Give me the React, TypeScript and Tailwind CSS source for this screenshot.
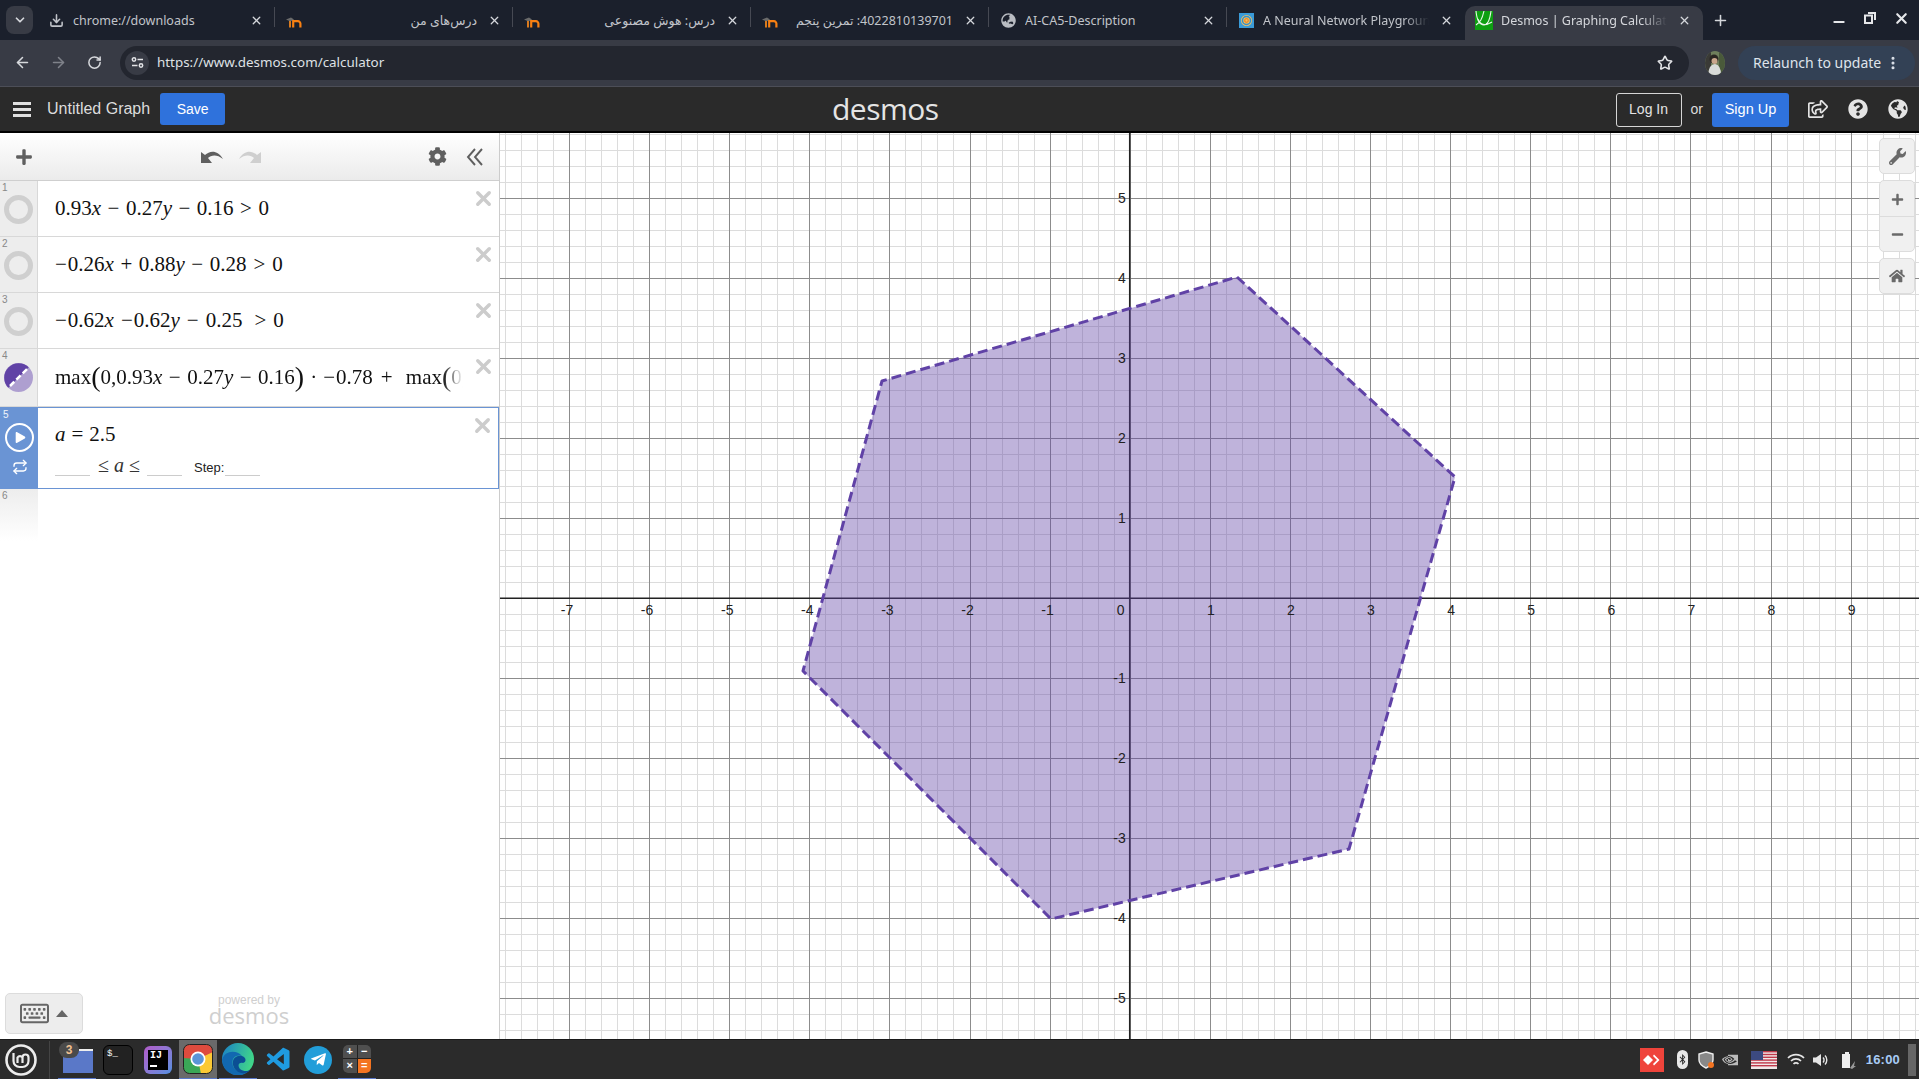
import React from "react";
import { ArrowLeft, ArrowRight, RotateCw, Star, Download, X, Plus, ChevronDown, Minus, EllipsisVertical, Repeat } from "lucide-react";
import { FaCog, FaWrench, FaPlus, FaMinus, FaHome, FaQuestionCircle, FaGlobeAmericas, FaRegShareSquare, FaBluetoothB, FaTelegramPlane, FaRegKeyboard, FaPlay, FaGlobeAsia } from "react-icons/fa";
import { SiNvidia } from "react-icons/si";
import { VscVscode } from "react-icons/vsc";

const Moodle = () => (
  <svg width="16" height="11" viewBox="0 0 16 11" className="mt-[3px]">
    <path d="M0 2.5 5 0.5 8 2.5 4.5 4.5Z" fill="#6b6b6b" />
    <rect x="3" y="4" width="2" height="6.5" fill="#d97a1e" />
    <path d="M7.2 10.5V4.2H12a2.4 2.4 0 0 1 2.4 2.4v3.9" fill="none" stroke="#f98012" strokeWidth="2.2" />
  </svg>
);

function Tab({ icon, title, rtl, active, sep = true, fade }: { icon: React.ReactNode; title: string; rtl?: boolean; active?: boolean; sep?: boolean; fade?: boolean }) {
  return (
    <div className={`relative w-[238px] shrink-0 h-[34px] flex items-center pl-[10px] pr-[12px] pb-[5px] gap-[8px] ${active ? "bg-[#383b45] rounded-t-[10px]" : ""}`}>
      <span className="w-[18px] flex justify-center shrink-0">{icon}</span>
      <span dir={rtl ? "rtl" : undefined} className={`flex-1 min-w-0 whitespace-nowrap overflow-hidden text-[12.5px] leading-[18px] ${active ? "text-[#d5d7dc]" : "text-[#c1c4ca]"} ${fade ? "[mask-image:linear-gradient(to_right,black_85%,transparent)]" : ""}`}>
        {title}
      </span>
      <X size={13} strokeWidth={2.4} className="shrink-0 ml-[3px] text-[#d5d7dc]" />
      {sep && <span className="absolute right-0 top-[1px] h-[20px] w-px bg-[#464953]" />}
    </div>
  );
}

function TabStrip() {
  return (
    <div className="h-10 bg-[#1b202c] flex items-end pl-[6px] shrink-0">
      <div className="w-[27px] h-[28px] mb-[6px] rounded-lg bg-[#383b45] flex items-center justify-center mr-[4px]">
        <ChevronDown size={14} strokeWidth={3} className="text-[#d5d7dc]" />
      </div>
      <Tab icon={<Download size={15} strokeWidth={2.5} className="text-[#c1c4ca]" />} title="chrome://downloads" />
      <Tab icon={<Moodle />} title="درس‌های من" rtl />
      <Tab icon={<Moodle />} title="درس: هوش مصنوعی" rtl />
      <Tab icon={<Moodle />} title="4022810139701: تمرین پنجم" rtl />
      <Tab icon={<FaGlobeAsia size={15} className="text-[#b9bcc2]" />} title="AI-CA5-Description" />
      <Tab
        icon={
          <svg width="15" height="15" viewBox="0 0 15 15">
            <rect width="15" height="15" fill="#3a9bd8" />
            <circle cx="7.5" cy="7.5" r="5.5" fill="#f3c05f" />
            <circle cx="7.5" cy="7.5" r="4" fill="none" stroke="#2f8fd0" strokeWidth="1.5" />
            <circle cx="7.5" cy="7.5" r="1.8" fill="none" stroke="#e88a2e" strokeWidth="1.3" />
          </svg>
        }
        title="A Neural Network Playground"
        sep={false}
        fade
      />
      <Tab
        active
        sep={false}
        fade
        icon={
          <svg width="18" height="19" viewBox="0 0 18 19">
            <rect width="18" height="19" fill="#0e9f12" />
            <path d="M1 0 C2 11 5 14 9 14 C13 14 15 8 16 0 M3 8 C6 16 12 14 17 11 M1 14 C5 11 7 9 9 0" fill="none" stroke="#e8f5e8" strokeWidth="1.1" />
          </svg>
        }
        title="Desmos | Graphing Calculator"
      />
      <Plus size={17} strokeWidth={2.2} className="ml-[9px] mb-[11px] text-[#d5d7dc]" />
      <div className="ml-auto mb-[10px] flex items-center gap-[17px] pr-[9px] text-[#e6e7ea]">
        <Minus size={16} strokeWidth={3} className="mt-[8px]" />
        <svg width="12" height="12" viewBox="0 0 12 12" fill="none" stroke="currentColor" strokeWidth="2"><rect x="1" y="3.5" width="7" height="7.5" /><path d="M4 1h7v7" /></svg>
        <X size={17} strokeWidth={3} />
      </div>
    </div>
  );
}

function Toolbar() {
  return (
    <div className="h-[47px] bg-[#383b45] border-b border-[#4c4e57] flex items-center shrink-0 pl-[14px] pr-[4px] pb-[1px]">
      <ArrowLeft size={17} strokeWidth={2.2} className="text-[#d7d9dd]" />
      <ArrowRight size={17} strokeWidth={2.2} className="ml-[19px] text-[#7f828a]" />
      <RotateCw size={15} strokeWidth={2.4} className="ml-[20px] text-[#d7d9dd]" />
      <div className="ml-[18px] w-[1569px] h-[34px] rounded-full bg-[#23262f] flex items-center pl-[5px] pr-[16px]">
        <span className="w-6 h-6 rounded-full bg-[#383b45] flex items-center justify-center">
          <svg width="13" height="13" viewBox="0 0 13 13" fill="none" stroke="#e3e4e7" strokeWidth="1.5">
            <circle cx="3" cy="3.5" r="1.7" /><path d="M6.5 3.5H12M1 9.5h5.5" /><circle cx="10" cy="9.5" r="1.7" />
          </svg>
        </span>
        <span className="ml-[8px] text-[13.4px] text-[#dfe1e5]">https://www.desmos.com/calculator</span>
        <Star size={16} strokeWidth={2.4} className="ml-auto text-[#e3e4e7]" />
      </div>
      <svg width="20" height="24" viewBox="0 0 20 24" className="ml-[16px] shrink-0">
        <defs><clipPath id="av"><ellipse cx="10" cy="12" rx="10" ry="12" /></clipPath></defs>
        <g clipPath="url(#av)">
          <rect width="20" height="24" fill="#6f7f5c" />
          <rect x="14" width="6" height="24" fill="#4a5a3a" />
          <rect y="0" width="6" height="24" fill="#3a3a36" />
          <circle cx="9" cy="8" r="4.5" fill="#2a2622" />
          <circle cx="9.5" cy="10" r="3" fill="#c9a68c" />
          <path d="M3 24 Q4 13 10 13 Q16 14 16 24Z" fill="#d9dbd9" />
        </g>
      </svg>
      <div className="ml-[13px] w-[177px] h-[34px] rounded-full bg-[#334155] flex items-center pl-[15px] text-[#dfe4ec] text-[14px]">
        Relaunch to update
        <EllipsisVertical size={16} strokeWidth={2.6} className="ml-[4px]" />
      </div>
    </div>
  );
}

function Header() {
  return (
    <div className="h-[46px] bg-[#2a2a2a] border-b-2 border-black flex items-center shrink-0 relative [font-family:'Liberation_Sans',sans-serif]">
      <div className="ml-[13px] w-[18px] h-[15px] flex flex-col justify-between">
        <span className="h-[3px] bg-[#e0e0e0]" /><span className="h-[3px] bg-[#e0e0e0]" /><span className="h-[3px] bg-[#e0e0e0]" />
      </div>
      <span className="ml-[16px] text-[16px] text-[#dcdcdc]">Untitled Graph</span>
      <button className="ml-[10px] w-[65px] h-[32px] rounded-[3px] bg-[#2f72dc] text-white text-[14px]">Save</button>
      <span className="absolute left-[832px] top-[-1px] text-[30px] leading-[46px] font-normal text-[#e4e4e4] [font-family:'Open_Sans',sans-serif] tracking-[-0.5px]">desmos</span>
      <button className="ml-auto mt-[1px] w-[66px] h-[34px] rounded-[3px] border border-[#d5d5d5] text-[#e4e4e4] text-[14px]">Log In</button>
      <span className="ml-[9px] text-[14px] text-[#dcdcdc]">or</span>
      <button className="ml-[9px] mt-[1px] w-[77px] h-[34px] rounded-[3px] bg-[#2f72dc] text-white text-[14.5px]">Sign Up</button>
      <FaRegShareSquare size={20} className="ml-[19px] text-[#e4e4e4]" />
      <FaQuestionCircle size={20} className="ml-[20px] text-[#e4e4e4]" />
      <FaGlobeAmericas size={20} className="ml-[20px] mr-[11px] text-[#e4e4e4]" />
    </div>
  );
}

const I = ({ children }: { children: React.ReactNode }) => <i className="italic">{children}</i>;
const Op = ({ children, w = "mx-[6.5px]" }: { children: React.ReactNode; w?: string }) => <span className={w}>{children}</span>;
const Neg = () => <span className="mr-[1px]">−</span>;

function CloseX() {
  return <X size={23} strokeWidth={3.6} className="absolute right-[4px] top-[6px] text-[#cccccc]" />;
}

function Row({ n, h, pt = "pt-[12px]", children, icon }: { n: number; h: string; pt?: string; children: React.ReactNode; icon?: React.ReactNode }) {
  return (
    <div className={`${h} flex border-b border-[#d8d8d8] relative shrink-0`}>
      <div className="w-[38px] bg-[#ededed] border-r border-[#d8d8d8] relative shrink-0">
        <span className="absolute left-[2px] top-[1px] text-[10px] leading-[12px] text-[#888]">{n}</span>
        <div className="absolute left-[4px] top-[14px]">{icon ?? <span className="block w-[29px] h-[29px] rounded-full border-[5px] border-[#cfcfcf] bg-[#ededed]" />}</div>
      </div>
      <div className={`flex-1 min-w-0 pl-[17px] pr-[36px] ${pt} text-[21px] leading-[30px] whitespace-nowrap overflow-hidden text-[#111] [font-family:'Liberation_Serif',serif]`}>
        {children}
      </div>
      <CloseX />
    </div>
  );
}

const Paren = ({ c }: { c: string }) => <span className="text-[28px] leading-[28px] align-[-2px] font-light">{c}</span>;

function ExpressionPanel() {
  return (
    <div className="w-[500px] shrink-0 border-r border-[#cccccc] bg-white relative flex flex-col [font-family:'Liberation_Sans',sans-serif]">
      <div className="h-[48px] shrink-0 bg-gradient-to-b from-white to-[#ebebeb] border-b border-[#cfcfcf] flex items-center text-[#5f5f5f]">
        <FaPlus size={18} className="ml-[15px]" />
        <svg width="22" height="14" viewBox="0 0 22 14" className="ml-[168px] mb-[2px]" fill="#5f5f5f"><path d="M0 14V3l4 3C9 1 17 1 22 10 16 5 10 6 7 9l4 5Z" /></svg>
        <svg width="22" height="14" viewBox="0 0 22 14" className="ml-[16px] mb-[2px]" fill="#cfcfcf"><path d="M22 14V3l-4 3C13 1 5 1 0 10c6-5 12-4 15-1l-4 5Z" /></svg>
        <FaCog size={19} className="ml-[167px]" />
        <span className="ml-[19px] flex">
          <svg width="18" height="18" viewBox="0 0 18 18" fill="none" stroke="#5f5f5f" strokeWidth="1.9"><path d="M9 1 2 9l7 8M16 1 9 9l7 8" /></svg>
        </span>
      </div>
      <Row n={1} h="h-[56px]"><span>0.93<I>x</I><Op>−</Op>0.27<I>y</I><Op>−</Op>0.16<Op>&gt;</Op>0</span></Row>
      <Row n={2} h="h-[56px]"><span><Neg />0.26<I>x</I><Op>+</Op>0.88<I>y</I><Op>−</Op>0.28<Op w="mx-[7px]">&gt;</Op>0</span></Row>
      <Row n={3} h="h-[56px]"><span><Neg />0.62<I>x</I><Op w="ml-[7px] mr-[1px]">−</Op>0.62<I>y</I><Op w="mx-[7px]">−</Op>0.25<Op w="ml-[12px] mr-[7px]">&gt;</Op>0</span></Row>
      <Row
        n={4}
        h="h-[58px]"
        pt="pt-[13px]"
        icon={
          <svg width="29" height="29" viewBox="0 0 29 29" className="block">
            <circle cx="14.5" cy="14.5" r="14.5" fill="#ae9fd0" />
            <path d="M4.25 24.75 A14.5 14.5 0 0 1 24.75 4.25 Z" fill="#6042a6" />
            <path d="M6 23 L23 6" stroke="#fff" strokeWidth="2.5" strokeDasharray="6 3" />
          </svg>
        }
      >
        <div className="[mask-image:linear-gradient(to_right,black_95%,transparent)] overflow-hidden">
          max<Paren c="(" />0,0.93<I>x</I><Op>−</Op>0.27<I>y</I><Op>−</Op>0.16<Paren c=")" /><Op w="mx-[6px]">·</Op><Neg />0.78<Op w="mx-[8px]">+</Op> max<Paren c="(" />0,
        </div>
      </Row>
      <div className="h-[82px] flex shrink-0 relative border border-[#6a94d4]">
        <div className="w-[37px] bg-[#6a94d4] relative shrink-0 flex flex-col items-center text-white">
          <span className="absolute left-[2px] top-[1px] text-[10px] leading-[12px] text-[#f0f4fa]">5</span>
          <span className="mt-[15px] w-[29px] h-[29px] rounded-full border-2 border-white flex items-center justify-center">
            <FaPlay size={11} className="ml-[2px]" />
          </span>
          <Repeat size={16} strokeWidth={2} className="mt-[7px]" />
        </div>
        <div className="flex-1 pl-[17px] pt-[11px] [font-family:'Liberation_Serif',serif] text-[#111]">
          <div className="text-[21px] leading-[30px]"><I>a</I><Op w="mx-[6px]">=</Op>2.5</div>
          <div className="mt-[5px] flex items-end h-[22px]">
            <span className="w-[35px] border-b border-[#ccc] h-[22px]" />
            <span className="ml-[8px] mr-[7px] text-[20px] leading-[22px] text-[#333] whitespace-nowrap">≤ <I>a</I> ≤</span>
            <span className="w-[35px] border-b border-[#ccc] h-[22px]" />
            <span className="ml-[12px] text-[13px] leading-[16px] text-[#222] [font-family:'Liberation_Sans',sans-serif]">Step:</span>
            <span className="ml-[1px] w-[35px] border-b border-[#ccc] h-[22px]" />
          </div>
        </div>
        <CloseX />
      </div>
      <div className="h-[52px] w-[38px] shrink-0 bg-gradient-to-b from-[#ededed] to-white relative">
        <span className="absolute left-[2px] top-[1px] text-[10px] leading-[12px] text-[#888]">6</span>
      </div>
      <div className="absolute left-[5px] bottom-[5px] w-[78px] h-[41px] rounded-[5px] bg-[#ededed] border border-[#dcdcdc] flex items-center justify-center gap-[7px] text-[#666]">
        <FaRegKeyboard size={29} />
        <span className="w-0 h-0 border-x-[6px] border-x-transparent border-b-[7px] border-b-[#666]" />
      </div>
      <div className="absolute left-[208px] bottom-[14px] w-[82px] flex flex-col items-center text-[#cfcfcf]">
        <span className="text-[12px] leading-[10px]">powered by</span>
        <span className="text-[22px] leading-[20px] [font-family:'Open_Sans',sans-serif]">desmos</span>
      </div>
    </div>
  );
}

const OX = 629.7, OY = 465.3, UX = 80.1, UY = 80;
const W = 1419, H = 906;
const range = (a: number, b: number) => Array.from({ length: b - a + 1 }, (_, i) => a + i);
const poly = [[1237, 277], [1455, 477], [1349, 849], [1051, 919], [803, 671], [882, 381]].map(([x, y]) => `${x - 500},${y - 133}`).join(" ");

function Graph() {
  return (
    <div className="flex-1 min-w-0 relative bg-white overflow-hidden [font-family:'Liberation_Sans',sans-serif]">
      <svg width={W} height={H} viewBox={`0 0 ${W} ${H}`} className="block">
        {range(-40, 50).map((i) => <line key={`vm${i}`} x1={Math.round(OX + (i * UX) / 5) + 0.5} x2={Math.round(OX + (i * UX) / 5) + 0.5} y1={0} y2={H} stroke="#dcdcdc" />)}
        {range(-35, 35).map((i) => <line key={`hm${i}`} y1={Math.round(OY - (i * UY) / 5) + 0.5} y2={Math.round(OY - (i * UY) / 5) + 0.5} x1={0} x2={W} stroke="#dcdcdc" />)}
        {range(-8, 10).map((i) => <line key={`v${i}`} x1={Math.round(OX + i * UX) + 0.5} x2={Math.round(OX + i * UX) + 0.5} y1={0} y2={H} stroke="#8c8c8c" />)}
        {range(-6, 6).map((i) => <line key={`h${i}`} y1={Math.round(OY - i * UY) + 0.5} y2={Math.round(OY - i * UY) + 0.5} x1={0} x2={W} stroke="#8c8c8c" />)}
        <line x1={OX} x2={OX} y1={0} y2={H} stroke="#222" strokeWidth="1.5" />
        <line y1={OY} y2={OY} x1={0} x2={W} stroke="#222" strokeWidth="1.5" />
        <polygon points={poly} fill="#6042a6" fillOpacity="0.4" stroke="#6042a6" strokeWidth="3" strokeDasharray="10 5" strokeLinejoin="round" />
        {range(-7, 9).filter((i) => i !== 0).map((i) => (
          <text key={`x${i}`} x={OX + i * UX + (i < 0 ? -2 : 1)} y={OY + 16.5} textAnchor="middle" fontSize="14" fill="#222">{i}</text>
        ))}
        <text x={OX - 9} y={OY + 16.5} textAnchor="middle" fontSize="14" fill="#222">0</text>
        {range(-5, 5).filter((i) => i !== 0).map((i) => (
          <text key={`y${i}`} x={OX - 4} y={OY - i * UY + 5} textAnchor="end" fontSize="14" fill="#222">{i}</text>
        ))}
      </svg>
      <div className="absolute right-[4px] top-[5px] w-[36px] flex flex-col text-[#6a6a6a]">
        <div className="h-[36px] rounded-[5px] bg-[#f0f0f0] border border-[#dcdcdc] flex items-center justify-center"><FaWrench size={17} /></div>
        <div className="mt-[6px] h-[72px] rounded-[5px] bg-[#f0f0f0] border border-[#dcdcdc] flex flex-col">
          <div className="flex-1 flex items-center justify-center border-b border-[#dcdcdc] pt-[2px]"><FaPlus size={13} /></div>
          <div className="flex-1 flex items-center justify-center pt-[1px]"><FaMinus size={13} /></div>
        </div>
        <div className="mt-[6px] h-[36px] rounded-[5px] bg-[#f0f0f0] border border-[#dcdcdc] flex items-center justify-center"><FaHome size={16} /></div>
      </div>
    </div>
  );
}

const Chrome = () => (
  <svg width="30" height="30" viewBox="0 0 30 30">
    <defs><clipPath id="cr"><rect x="0.5" y="0.5" width="29" height="29" rx="6" /></clipPath></defs>
    <g clipPath="url(#cr)">
      <rect width="30" height="30" fill="#3aa757" />
      <path d="M15 15 L30 6 V30 H15Z" fill="#fcc934" />
      <path d="M15 15 L0 14 V0 H30 V8Z" fill="#dd4b3e" />
      <path d="M15 15 L18 30 H12Z" fill="#3aa757" />
    </g>
    <rect x="0.5" y="0.5" width="29" height="29" rx="6" fill="none" stroke="#222" />
    <circle cx="15" cy="15" r="7.5" fill="#fff" />
    <circle cx="15" cy="15" r="5.8" fill="#5a95d8" />
  </svg>
);

const Edge = () => (
  <svg width="32" height="32" viewBox="0 0 32 32">
    <defs>
      <linearGradient id="eg" x1="0" y1="0" x2="1" y2="0.3"><stop offset="0" stopColor="#1a7fc9" /><stop offset="1" stopColor="#3fd48a" /></linearGradient>
    </defs>
    <circle cx="16" cy="16" r="16" fill="url(#eg)" />
    <path d="M0 17 C2 8 14 6 20 13 C12 11 9 17 11 23 C13 29 22 31 28 27 A16 16 0 0 1 0 17Z" fill="#1268b0" />
    <path d="M11 22 C10 16 14 12 20 13 C25 15 24 19 21 20 C17 19 15 22 18 26 C22 29 26 28 28 27 C23 33 13 30 11 22Z" fill="#0b4f94" />
  </svg>
);

function Taskbar() {
  return (
    <div className="h-10 shrink-0 bg-[#2b2b2b] border-t border-[#1a1a1a] flex items-center [font-family:'Liberation_Sans',sans-serif] relative">
      <svg width="32" height="32" viewBox="0 0 32 32" className="ml-[5px] shrink-0" fill="none" stroke="#ececec">
        <circle cx="16" cy="16" r="14.5" strokeWidth="2.6" />
        <path d="M8.5 9v8a6 6 0 0 0 6 6h3a6 6 0 0 0 6-6v-3.5a3 3 0 0 0-6 0V19M17.5 13.5a3 3 0 0 0-5 0V19" strokeWidth="2.2" />
      </svg>
      <span className="ml-[12px] w-px h-[38px] bg-[#444] shrink-0" />
      <div className="ml-[8px] w-[38px] h-10 border-b-2 border-[#5a78c8] flex items-center justify-center relative">
        <svg width="30" height="24" viewBox="0 0 30 24" className="mt-[5px] ml-[2px]"><path d="M0 2h30v22H0z" fill="#5a78c8" /><path d="M16 0h14v2H16z" fill="#eee" /></svg>
        <span className="absolute left-[1px] top-[2px] w-[20px] h-[16px] rounded-full bg-[#4a4a4a] text-[#f0c090] text-[12px] leading-[16px] font-bold text-center">3</span>
      </div>
      <div className="ml-[7px] w-[30px] h-[30px] rounded-[6px] bg-[#222] border border-black text-white text-[9px] leading-[14px] pl-[3px] pt-[1px] [font-family:'Liberation_Mono',monospace] shrink-0">$_</div>
      <div className="ml-[11px] w-[28px] h-[28px] rounded-[6px] bg-gradient-to-br from-[#b05ac8] to-[#4f8fe0] flex items-center justify-center shrink-0">
        <div className="w-[20px] h-[20px] bg-black text-white text-[10px] leading-[10px] font-bold px-[2px] pt-[1px] [font-family:'Liberation_Mono',monospace]">IJ<div className="w-[7px] h-[2px] bg-white mt-[4px]" /></div>
      </div>
      <div className="ml-[7px] w-[38px] h-10 bg-[#6a6a6a] border-b-2 border-[#5a78c8] flex items-center justify-center shrink-0"><Chrome /></div>
      <div className="ml-[2px] w-[38px] h-10 border-b-2 border-[#5a78c8] flex items-center justify-center shrink-0"><Edge /></div>
      <VscVscode size={28} className="ml-[8px] text-[#1f9be0] shrink-0" />
      <div className="ml-[11px] w-[28px] h-[28px] rounded-full bg-[#229ed9] flex items-center justify-center text-white shrink-0"><FaTelegramPlane size={17} /></div>
      <div className="ml-[6px] w-[38px] h-10 border-b-2 border-[#5a78c8] flex items-center justify-center shrink-0">
        <div className="w-[28px] h-[28px] rounded-[5px] overflow-hidden grid grid-cols-2 grid-rows-2 gap-px bg-[#222] text-white text-[11px] leading-[13px] font-bold text-center">
          <span className="bg-[#4f4f4f]">+</span><span className="bg-[#4f4f4f]">−</span><span className="bg-[#4f4f4f]">×</span><span className="bg-[#f47421]">=</span>
        </div>
      </div>
      <div className="ml-auto flex items-center text-[#e6e6e6] shrink-0">
        <div className="w-[24px] h-[24px] bg-[#ef443b] flex items-center justify-center mr-[2px]">
          <svg width="18" height="12" viewBox="0 0 18 12" fill="#fff"><path d="M5 1 10 6 5 11 0 6Z" /><path d="M11 0.5 16.5 6 11 11.5 10 10 14 6 10 2Z" /></svg>
        </div>
        <span className="ml-[11px] w-[11px] h-[19px] rounded-full bg-[#e8e8e8] flex items-center justify-center text-[#2b2b2b]"><FaBluetoothB size={11} /></span>
        <svg width="16" height="18" viewBox="0 0 16 18" className="ml-[10px]"><path d="M8 1 15 3v6c0 4-3 6-7 8-4-2-7-4-7-8V3Z" fill="#888" stroke="#eee" strokeWidth="1.4" /><circle cx="13" cy="14" r="3" fill="#f47421" /></svg>
        <SiNvidia size={16} className="ml-[8px] text-[#bbb]" />
        <svg width="26" height="18" viewBox="0 0 26 18" className="ml-[13px]">
          <rect width="26" height="18" fill="#f0e8e8" />
          {[0, 2.8, 5.6, 8.4, 11.2, 14].map((y) => <rect key={y} y={y} width="26" height="1.4" fill="#c0394a" />)}
          <rect width="12" height="9" fill="#3c4a80" />
        </svg>
        <svg width="18" height="14" viewBox="0 0 18 14" fill="none" stroke="#e6e6e6" strokeWidth="1.7" className="ml-[10px]"><path d="M1 5a11 11 0 0 1 16 0M4 8a7 7 0 0 1 10 0M6.5 11a3.5 3.5 0 0 1 5 0" /></svg>
        <svg width="16" height="14" viewBox="0 0 16 14" className="ml-[8px]" fill="#e6e6e6"><path d="M0 4.5h3L8 1v12L3 9.5H0Z" /><path d="M10 4.5a3.5 3.5 0 0 1 0 5M12 2.5a6.5 6.5 0 0 1 0 9" fill="none" stroke="#e6e6e6" strokeWidth="1.4" /></svg>
        <svg width="16" height="18" viewBox="0 0 16 18" className="ml-[12px]"><path d="M3 3h1V1h4v2h1v14H1V3Z" fill="#eee" /><path d="M9 17l5-7-1 5h2l-4 3Z" fill="#999" /></svg>
        <span className="ml-[9px] text-[13px] font-bold text-[#a8cbf5] tracking-[0.2px]">16:00</span>
        <span className="ml-[8px] mr-[3px] w-[8px] h-[32px] bg-[#666]" />
      </div>
    </div>
  );
}

export default function App() {
  return (
    <div className="w-[1919px] h-[1079px] overflow-hidden flex flex-col [font-family:'Noto_Sans','DejaVu_Sans',sans-serif]">
      <TabStrip />
      <Toolbar />
      <Header />
      <div className="flex-1 min-h-0 flex">
        <ExpressionPanel />
        <Graph />
      </div>
      <Taskbar />
    </div>
  );
}
